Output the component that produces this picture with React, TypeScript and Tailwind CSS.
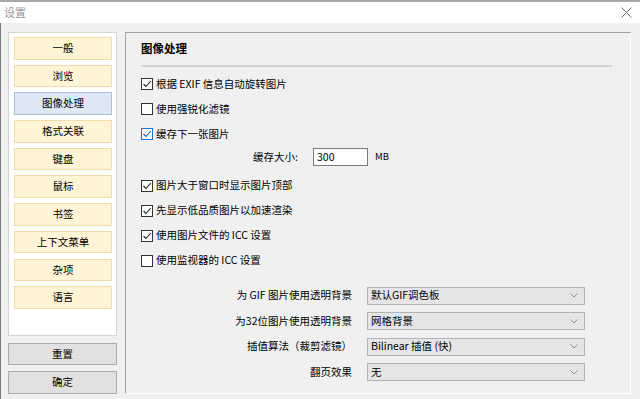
import React from 'react';

const navItems = ['一般', '浏览', '图像处理', '格式关联', '键盘', '鼠标', '书签', '上下文菜单', '杂项', '语言'];

const Check = ({ checked, focus }: { checked: boolean; focus?: boolean }) => (
  <span
    className={`flex h-[12px] w-[12px] shrink-0 items-center justify-center border bg-white ${
      focus ? 'border-[#1c73d3]' : 'border-[#333333]'
    }`}
  >
    {checked && (
      <svg width="10" height="10" viewBox="0 0 10 10">
        <polyline
          points="1.5,5 4,7.5 8.8,2"
          fill="none"
          stroke={focus ? '#1c5fb0' : '#222222'}
          strokeWidth="1.1"
        />
      </svg>
    )}
  </span>
);

const CheckRow = ({ label, checked, focus }: { label: string; checked: boolean; focus?: boolean }) => (
  <div className="flex h-[25px] items-center gap-[3px]">
    <Check checked={checked} focus={focus} />
    <span>{label}</span>
  </div>
);

const SelectRow = ({ label, value }: { label: string; value: string }) => (
  <div className="flex h-[18px] items-center">
    <div className="w-[211px] text-right">{label}</div>
    <div className="ml-[15px] flex h-[18px] w-[218px] items-center justify-between border border-[#b3b3b3] bg-[#e5e5e5] pl-[3px] pr-[6px]">
      <span>{value}</span>
      <svg width="8" height="5" viewBox="0 0 8 5">
        <polyline points="0.5,0.5 4,4 7.5,0.5" fill="none" stroke="#8a8a8a" strokeWidth="1" />
      </svg>
    </div>
  </div>
);

export default function App() {
  return (
    <div
      className="flex h-[399px] w-[640px] flex-col overflow-hidden bg-[#f0f0f0] text-[10.5px] leading-none text-black"
      style={{ fontFamily: '"Noto Sans CJK SC", "Noto Sans", sans-serif' }}
    >
      {/* Title bar */}
      <div className="flex h-[23px] shrink-0 items-center justify-between border-t-2 border-[#a8a8a8] bg-white pl-[4px] pr-[8px]">
        <span className="text-[11px] text-[#9a9a9a]">设置</span>
        <svg width="11" height="11" viewBox="0 0 11 11">
          <line x1="0.5" y1="0.5" x2="10.5" y2="10.5" stroke="#6f6f6f" strokeWidth="1" />
          <line x1="10.5" y1="0.5" x2="0.5" y2="10.5" stroke="#6f6f6f" strokeWidth="1" />
        </svg>
      </div>

      {/* Body */}
      <div className="flex flex-1 gap-[8px] border-l border-[#7a7a7a] pb-[5px] pl-[7px] pr-[9px] pt-[9px]">
        {/* Left column */}
        <div className="flex w-[109px] flex-col">
          <div className="flex flex-1 flex-col gap-[5.2px] border border-[#d4d4d4] bg-white pl-[5px] pr-[4px] pt-[4px]">
            {navItems.map((item) => (
              <div
                key={item}
                className={`flex h-[22.5px] items-center justify-center border ${
                  item === '图像处理'
                    ? 'border-[#a9bfdf] bg-[#dde7f5]'
                    : 'border-[#f2dcaa] bg-[#fff4d6]'
                }`}
              >
                {item}
              </div>
            ))}
          </div>
          <div className="mt-[7px] flex h-[22px] items-center justify-center border border-[#adadad] bg-[#e1e1e1]">
            重置
          </div>
          <div className="mt-[6px] flex h-[23px] items-center justify-center border border-[#adadad] bg-[#e1e1e1]">
            确定
          </div>
        </div>

        {/* Right panel */}
        <div className="flex flex-1 flex-col border-b border-l border-r border-t border-[#a0a0a0] border-b-white border-r-white pl-[15px] pr-[18px] pt-[7px]">
          <div className="text-[11.5px] font-bold leading-[16px]">图像处理</div>
          <div className="mt-[9px] border-t-2 border-[#d2d2d2]" />

          <div className="mt-[4.5px] flex flex-col">
            <CheckRow label="根据 EXIF 信息自动旋转图片" checked />
            <CheckRow label="使用强锐化滤镜" checked={false} />
            <CheckRow label="缓存下一张图片" checked focus />
            <div className="flex h-[21px] items-center">
              <span className="ml-[112px] w-[58px]">缓存大小:</span>
              <div className="ml-[2px] flex h-[18px] w-[55px] items-center border border-[#7a7a7a] bg-white pl-[3px]">
                300
              </div>
              <span className="ml-[7px] text-[9.5px]">MB</span>
            </div>
            <div className="mt-[5.5px] flex flex-col">
              <CheckRow label="图片大于窗口时显示图片顶部" checked />
              <CheckRow label="先显示低品质图片以加速渲染" checked />
              <CheckRow label="使用图片文件的 ICC 设置" checked />
              <CheckRow label="使用监视器的 ICC 设置" checked={false} />
            </div>
          </div>

          <div className="mt-[13.5px] flex flex-col gap-[7.5px]">
            <SelectRow label="为 GIF 图片使用透明背景" value="默认GIF调色板" />
            <SelectRow label="为32位图片使用透明背景" value="网格背景" />
            <SelectRow label="插值算法（裁剪滤镜）" value="Bilinear 插值 (快)" />
            <SelectRow label="翻页效果" value="无" />
          </div>
        </div>
      </div>
    </div>
  );
}
